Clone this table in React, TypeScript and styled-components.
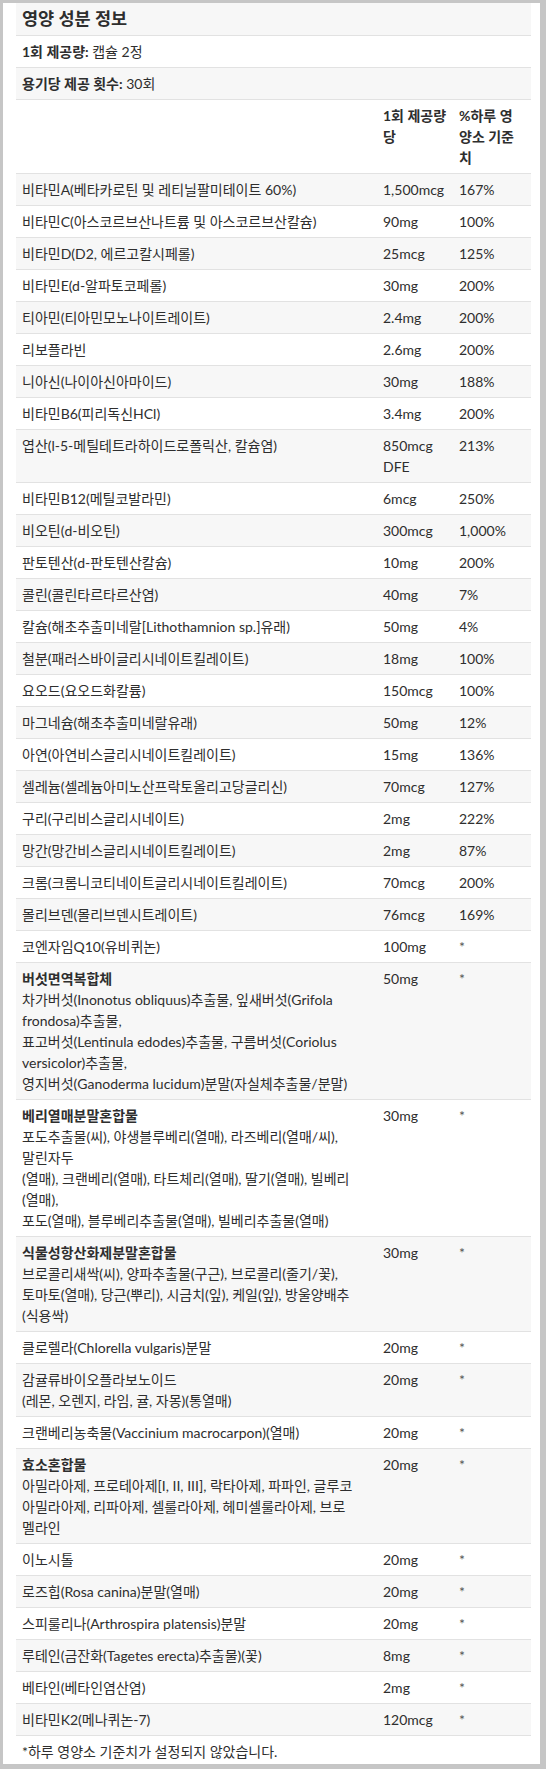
import React from "react";
import styled, { createGlobalStyle } from "styled-components";

interface Nutrient {
  lines: string[];
  head?: boolean;
  amount: string;
  dv: string;
}

const nutrients: Nutrient[] = [
  { lines: ["비타민A(베타카로틴 및 레티닐팔미테이트 60%)"], amount: "1,500mcg", dv: "167%" },
  { lines: ["비타민C(아스코르브산나트륨 및 아스코르브산칼슘)"], amount: "90mg", dv: "100%" },
  { lines: ["비타민D(D2, 에르고칼시페롤)"], amount: "25mcg", dv: "125%" },
  { lines: ["비타민E(d-알파토코페롤)"], amount: "30mg", dv: "200%" },
  { lines: ["티아민(티아민모노나이트레이트)"], amount: "2.4mg", dv: "200%" },
  { lines: ["리보플라빈"], amount: "2.6mg", dv: "200%" },
  { lines: ["니아신(나이아신아마이드)"], amount: "30mg", dv: "188%" },
  { lines: ["비타민B6(피리독신HCl)"], amount: "3.4mg", dv: "200%" },
  { lines: ["엽산(l-5-메틸테트라하이드로폴릭산, 칼슘염)"], amount: "850mcg DFE", dv: "213%" },
  { lines: ["비타민B12(메틸코발라민)"], amount: "6mcg", dv: "250%" },
  { lines: ["비오틴(d-비오틴)"], amount: "300mcg", dv: "1,000%" },
  { lines: ["판토텐산(d-판토텐산칼슘)"], amount: "10mg", dv: "200%" },
  { lines: ["콜린(콜린타르타르산염)"], amount: "40mg", dv: "7%" },
  { lines: ["칼슘(해초추출미네랄[Lithothamnion sp.]유래)"], amount: "50mg", dv: "4%" },
  { lines: ["철분(패러스바이글리시네이트킬레이트)"], amount: "18mg", dv: "100%" },
  { lines: ["요오드(요오드화칼륨)"], amount: "150mcg", dv: "100%" },
  { lines: ["마그네슘(해초추출미네랄유래)"], amount: "50mg", dv: "12%" },
  { lines: ["아연(아연비스글리시네이트킬레이트)"], amount: "15mg", dv: "136%" },
  { lines: ["셀레늄(셀레늄아미노산프락토올리고당글리신)"], amount: "70mcg", dv: "127%" },
  { lines: ["구리(구리비스글리시네이트)"], amount: "2mg", dv: "222%" },
  { lines: ["망간(망간비스글리시네이트킬레이트)"], amount: "2mg", dv: "87%" },
  { lines: ["크롬(크롬니코티네이트글리시네이트킬레이트)"], amount: "70mcg", dv: "200%" },
  { lines: ["몰리브덴(몰리브덴시트레이트)"], amount: "76mcg", dv: "169%" },
  { lines: ["코엔자임Q10(유비퀴논)"], amount: "100mg", dv: "*" },
  {
    head: true,
    lines: [
      "버섯면역복합체",
      "차가버섯(Inonotus obliquus)추출물, 잎새버섯(Grifola",
      "frondosa)추출물,",
      "표고버섯(Lentinula edodes)추출물, 구름버섯(Coriolus",
      "versicolor)추출물,",
      "영지버섯(Ganoderma lucidum)분말(자실체추출물/분말)",
    ],
    amount: "50mg",
    dv: "*",
  },
  {
    head: true,
    lines: [
      "베리열매분말혼합물",
      "포도추출물(씨), 야생블루베리(열매), 라즈베리(열매/씨),",
      "말린자두",
      "(열매), 크랜베리(열매), 타트체리(열매), 딸기(열매), 빌베리",
      "(열매),",
      "포도(열매), 블루베리추출물(열매), 빌베리추출물(열매)",
    ],
    amount: "30mg",
    dv: "*",
  },
  {
    head: true,
    lines: [
      "식물성항산화제분말혼합물",
      "브로콜리새싹(씨), 양파추출물(구근), 브로콜리(줄기/꽃),",
      "토마토(열매), 당근(뿌리), 시금치(잎), 케일(잎), 방울양배추",
      "(식용싹)",
    ],
    amount: "30mg",
    dv: "*",
  },
  { lines: ["클로렐라(Chlorella vulgaris)분말"], amount: "20mg", dv: "*" },
  { lines: ["감귤류바이오플라보노이드", "(레몬, 오렌지, 라임, 귤, 자몽)(통열매)"], amount: "20mg", dv: "*" },
  { lines: ["크랜베리농축물(Vaccinium macrocarpon)(열매)"], amount: "20mg", dv: "*" },
  {
    head: true,
    lines: [
      "효소혼합물",
      "아밀라아제, 프로테아제[I, II, III], 락타아제, 파파인, 글루코",
      "아밀라아제, 리파아제, 셀룰라아제, 헤미셀룰라아제, 브로",
      "멜라인",
    ],
    amount: "20mg",
    dv: "*",
  },
  { lines: ["이노시톨"], amount: "20mg", dv: "*" },
  { lines: ["로즈힙(Rosa canina)분말(열매)"], amount: "20mg", dv: "*" },
  { lines: ["스피룰리나(Arthrospira platensis)분말"], amount: "20mg", dv: "*" },
  { lines: ["루테인(금잔화(Tagetes erecta)추출물)(꽃)"], amount: "8mg", dv: "*" },
  { lines: ["베타인(베타인염산염)"], amount: "2mg", dv: "*" },
  { lines: ["비타민K2(메나퀴논-7)"], amount: "120mcg", dv: "*" },
];

const GlobalStyle = createGlobalStyle`
  html, body {
    margin: 0;
    padding: 0;
    background: #c6c6c6;
  }
  body {
    font-family: Lato, "Noto Sans CJK KR", sans-serif;
    color: #2e2e2e;
  }
`;

const Frame = styled.div`
  margin: 3px 6px 5px 3px;
  padding: 0 9px 0 13px;
  background: #fff;
`;

const Table = styled.table`
  width: 100%;
  border-collapse: collapse;
  table-layout: fixed;
  font-size: 14px;
  line-height: 21px;
`;

const NameCol = styled.col`
  width: 361px;
`;

const AmountCol = styled.col`
  width: 76px;
`;

const Row = styled.tr`
  border-bottom: 1px solid #e2e2e2;

  &:nth-child(odd) {
    background: #f7f7f7;
  }
`;

const Cell = styled.td`
  padding: 5px 4px 5px 6px;
  vertical-align: top;
  overflow-wrap: break-word;
`;

const TitleCell = styled(Cell)`
  font-size: 17.5px;
  line-height: 22px;
  font-weight: bold;
`;

const HeadCell = styled(Cell)`
  font-weight: bold;
`;

const Label = styled.b`
  font-weight: bold;
`;

const Line = styled.div<{ $bold?: boolean }>`
  white-space: nowrap;
  font-weight: ${(p) => (p.$bold ? "bold" : "normal")};
`;

const Star = styled.span`
  color: #555;
`;

const Footnote = styled.p`
  margin: 0;
  padding: 5px 6px 2px;
  font-size: 14px;
  line-height: 21px;
`;

const App = (): JSX.Element => {
  return (
    <>
      <GlobalStyle />
      <Frame>
        <Table>
          <colgroup>
            <NameCol />
            <AmountCol />
            <col />
          </colgroup>
          <tbody>
            <Row>
              <TitleCell colSpan={3}>영양 성분 정보</TitleCell>
            </Row>
            <Row>
              <Cell colSpan={3}>
                <Label>1회 제공량:</Label> 캡슐 2정
              </Cell>
            </Row>
            <Row>
              <Cell colSpan={3}>
                <Label>용기당 제공 횟수:</Label> 30회
              </Cell>
            </Row>
            <Row>
              <HeadCell />
              <HeadCell>
                1회 제공량
                <br />당
              </HeadCell>
              <HeadCell>
                %하루 영<br />
                양소 기준
                <br />치
              </HeadCell>
            </Row>
            {nutrients.map((n, i) => (
              <Row key={i}>
                <Cell>
                  {n.lines.map((line, j) => (
                    <Line key={j} $bold={n.head && j === 0}>
                      {line}
                    </Line>
                  ))}
                </Cell>
                <Cell>{n.amount}</Cell>
                <Cell>{n.dv === "*" ? <Star>*</Star> : n.dv}</Cell>
              </Row>
            ))}
          </tbody>
        </Table>
        <Footnote>*하루 영양소 기준치가 설정되지 않았습니다.</Footnote>
      </Frame>
    </>
  );
};

export default App;
